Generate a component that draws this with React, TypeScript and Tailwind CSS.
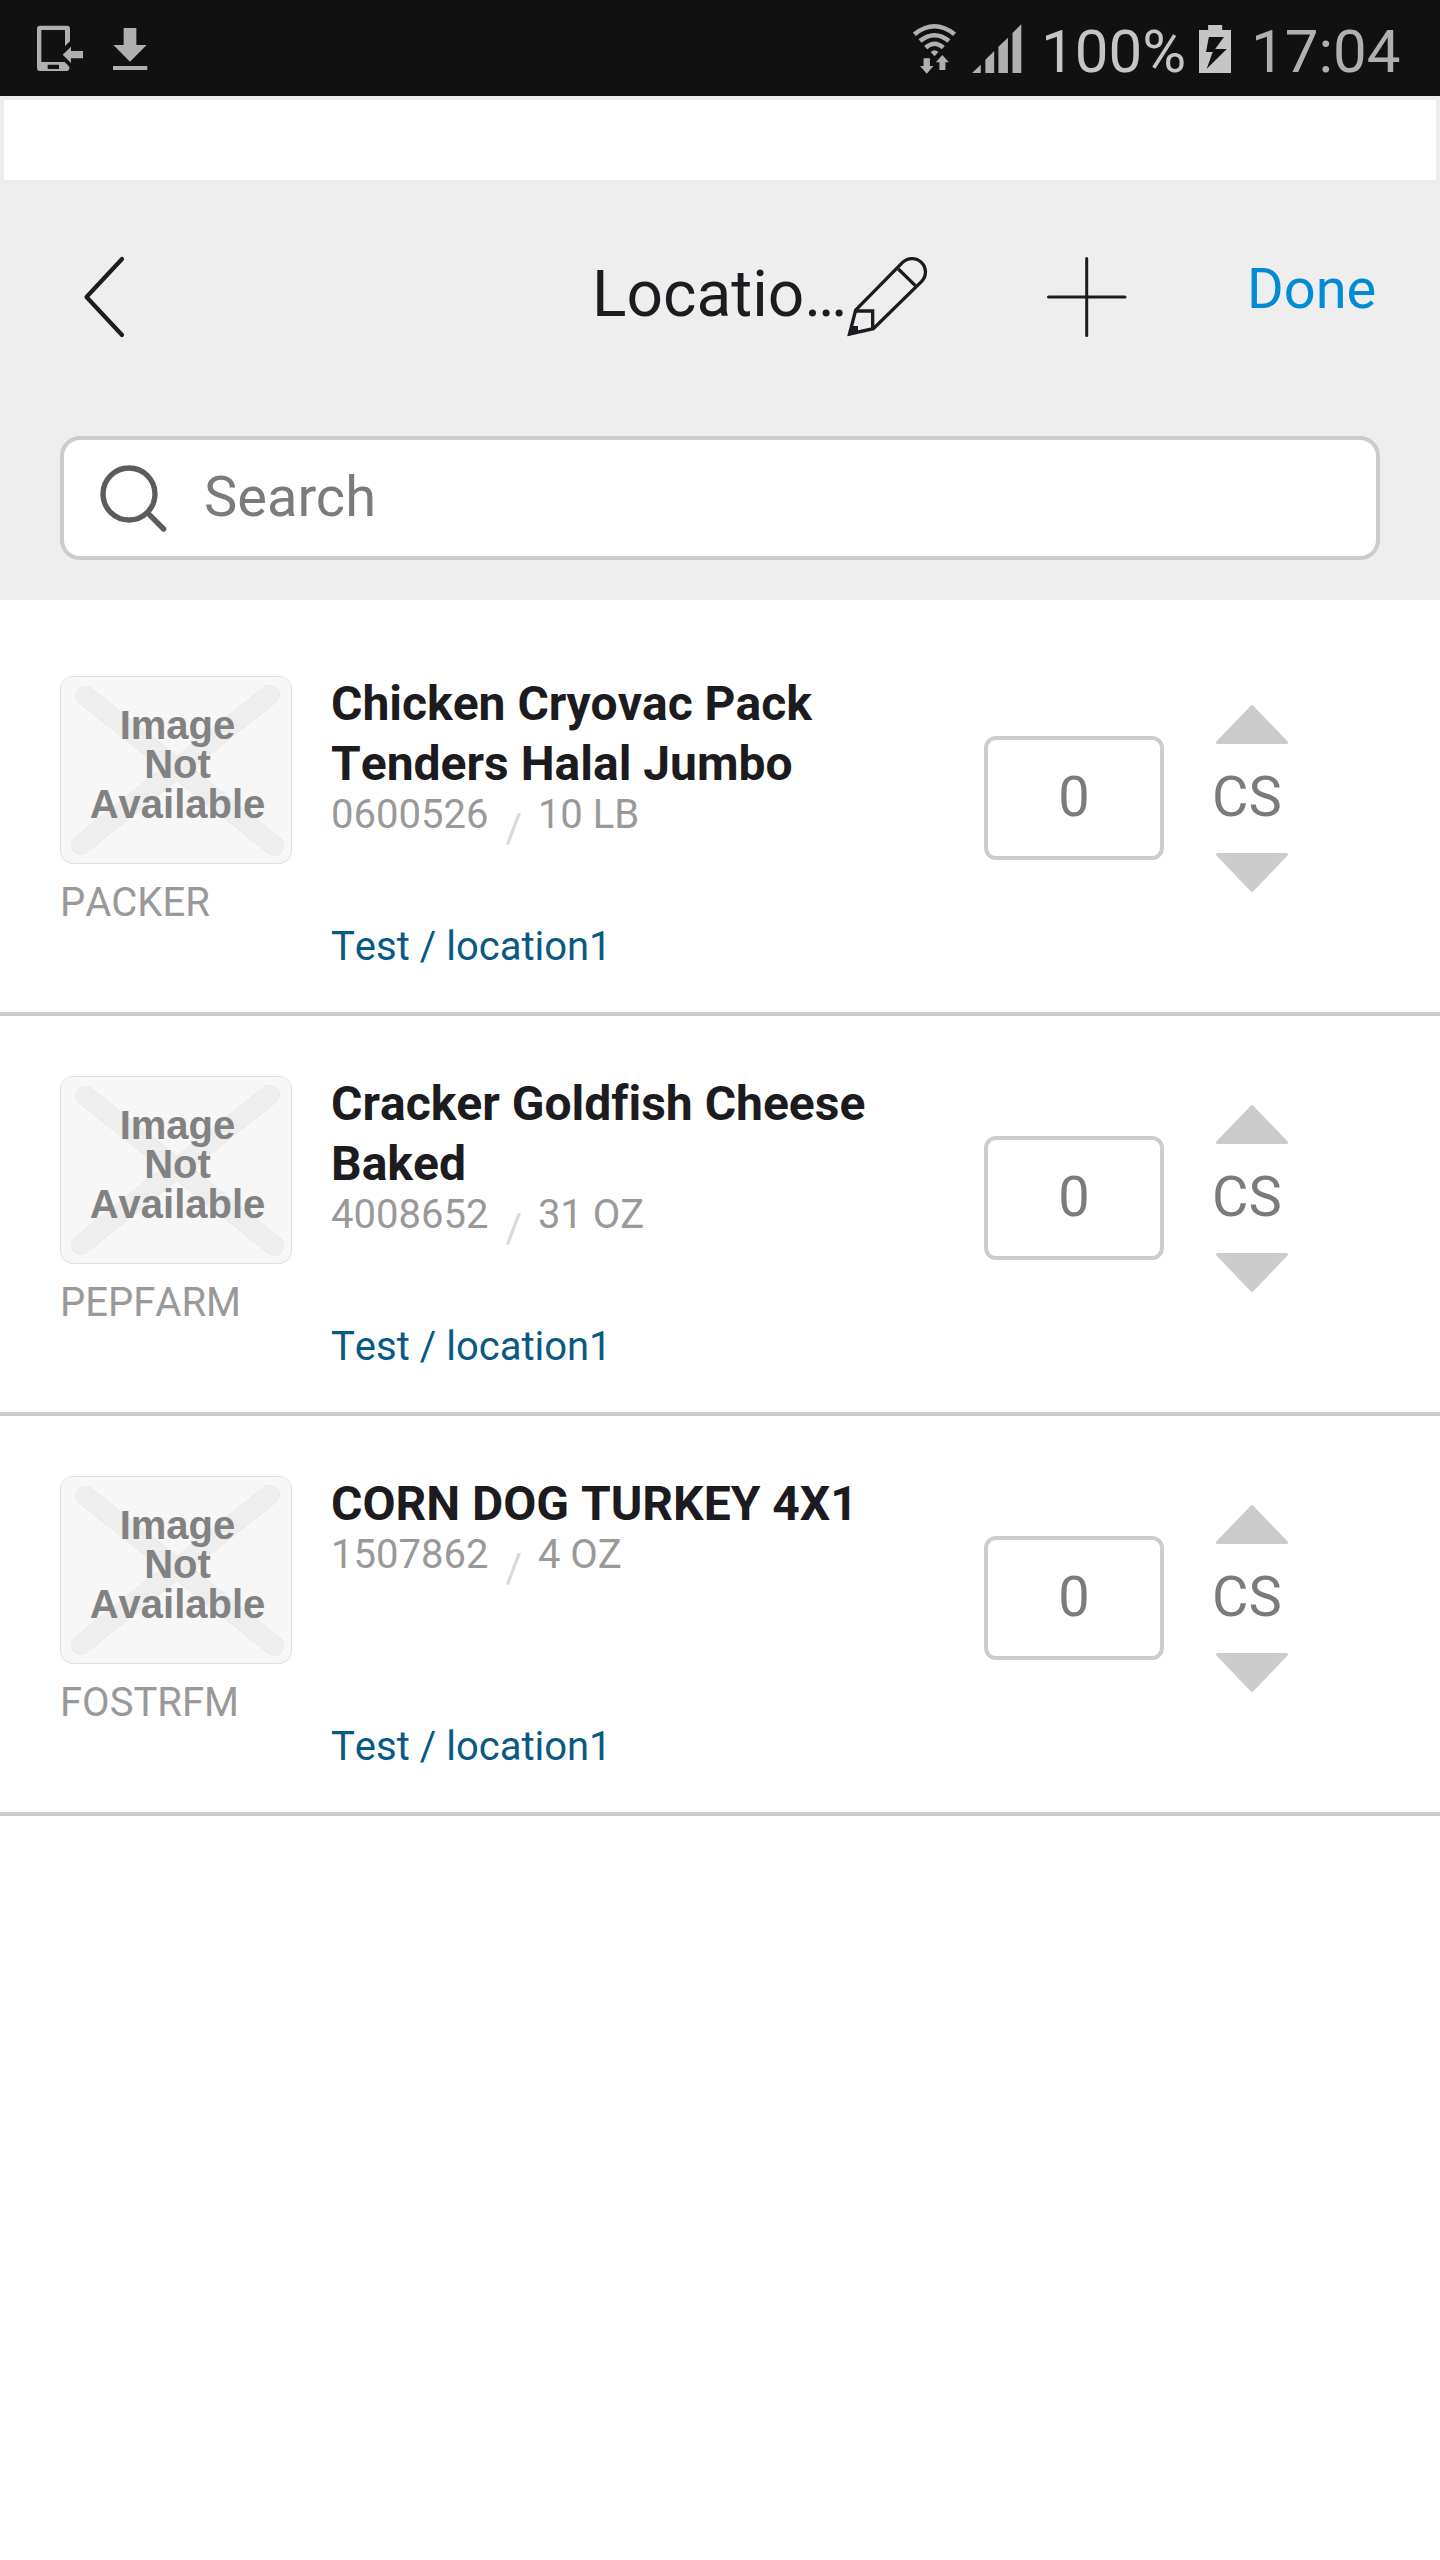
const items = [
  { brand: 'PACKER', title: ['Chicken Cryovac Pack', 'Tenders Halal Jumbo'], sku: '0600526', size: '10 LB' },
  { brand: 'PEPFARM', title: ['Cracker Goldfish Cheese', 'Baked'], sku: '4008652', size: '31 OZ' },
  { brand: 'FOSTRFM', title: ['CORN DOG TURKEY 4X1'], sku: '1507862', size: '4 OZ' },
];

function StatusBar() {
  return (
    <div className="flex h-24 items-start bg-[#111111]">
      <svg className="ml-9 mt-6 h-12 w-12 shrink-0" viewBox="108 72 144 144" fill="#b0b0b0">
        <path
          fillRule="evenodd"
          d="M120 77H201Q210 77 210 86V124L195 138V90H124V186H194L208 200V204Q208 213 199 213H120Q111 213 111 204V86Q111 77 120 77ZM143 194V207H177V194Z"
        />
        <path d="M188 164L213 140V153H249V175H213V189Z" />
      </svg>
      <svg className="ml-7 mt-6 h-12 w-9 shrink-0" viewBox="336 72 108 144" fill="#b0b0b0">
        <path d="M371 84H409V135H440L390 185L340 135H371ZM339 198H442V210H339Z" />
      </svg>
      <svg className="ml-[765px] mt-6 h-[50px] w-[43px] shrink-0" viewBox="66 72 122 150" preserveAspectRatio="none">
        <g fill="none" stroke="#b0b0b0" strokeWidth="13">
          <path d="M70 103Q127 55 184 103" />
          <path d="M86 123Q127 88 168 123" />
          <path d="M102 143Q127 120 152 143" />
        </g>
        <path fill="#b0b0b0" d="M116 156Q127 145 138 156L127 169ZM96 175H114V198H124L105 221L86 198H96ZM141 210V187H131L149 165L168 187H158V210Z" />
      </svg>
      <svg className="ml-4 mt-6 h-[49px] w-[50px] shrink-0" viewBox="233 72 142 147" preserveAspectRatio="none" fill="#b0b0b0">
        <path d="M233 219L258 194V219ZM271 219V179L296 153V219ZM308 219V140L335 113V219ZM348 219V99L373 73V219Z" />
      </svg>
      <span className="ml-[19px] w-[150px] whitespace-nowrap text-[60px] leading-[103px] text-[#c5c5c5]">100%</span>
      <svg className="ml-2 mt-[25px] h-12 w-8 shrink-0" viewBox="881 75 91 144" preserveAspectRatio="none" fill="#c5c5c5">
        <path fillRule="evenodd" d="M881 90H907V75H947V90H972V219H881ZM909 111H952L927 147H960L903 206L920 156H901Z" />
      </svg>
      <span className="ml-5 whitespace-nowrap text-[60px] leading-[103px] text-[#b0b0b0]">17:04</span>
    </div>
  );
}

function Header() {
  return (
    <header className="h-[420px] bg-[#eeeeee]">
      <div className="flex h-64 items-start">
        <svg className="ml-[82px] mt-[75px] h-[84px] w-11 shrink-0" viewBox="0 0 44 84" fill="none" stroke="#1d1d1f" strokeWidth="4.2" strokeLinecap="round" strokeLinejoin="round">
          <path d="M40 4L4.500 42L40 80" />
        </svg>
        <h1 className="ml-[466px] mt-[75px] w-[254px] whitespace-nowrap text-[64px] leading-[80px] text-[#1c1b20]">Locatio…</h1>
        <svg className="mt-[76px] h-[82px] w-[82px] shrink-0" viewBox="828 78 246 246" fill="none" stroke="#1c1b20" strokeWidth="10">
          <path d="M838.500 312L857 240L997 98A40.310 40.310 0 0 1 1055 154L910 296Z" />
          <path d="M857 243H908V296M985 117L1036 167" />
          <path d="M834 318L842 288H864V310Z" fill="#1c1b20" stroke="none" />
        </svg>
        <svg className="ml-[118px] mt-[76px] h-[82px] w-[82px] shrink-0" viewBox="0 0 82 82" stroke="#1d1d1f" strokeWidth="3" strokeLinecap="round">
          <path d="M40.700 2.500V79.500M2.500 41H79" />
        </svg>
        <button className="ml-[119px] mt-[77px] text-[56px] leading-[64px] text-[#008bd6]">Done</button>
      </div>
      <div className="mx-[60px] flex h-[124px] items-start rounded-[20px] border-4 border-[#cccccc] bg-white">
        <svg className="ml-9 mt-[25px] h-[68px] w-[68px] shrink-0" viewBox="180 135 204 204" fill="none" stroke="#5c5c5c" strokeWidth="16" strokeLinecap="round">
          <circle cx="267" cy="222" r="78" />
          <path d="M325 281L371 327" />
        </svg>
        <span className="ml-9 mt-[25px] text-[56px] leading-[64px] text-[#7b7b7b]">Search</span>
      </div>
    </header>
  );
}

function MissingImage() {
  return (
    <div className="relative h-[188px] w-[232px] overflow-hidden rounded-[13px] border border-[#e0e0e0] bg-[#f7f7f7]">
      <svg className="absolute -left-px -top-px h-[188px] w-[232px]" viewBox="60 48 696 564" fill="none" strokeLinecap="round">
        <path d="M137 108L703 557M690 104L123 554" stroke="#e7e7e7" strokeWidth="60" />
        <path d="M137 108L703 557M690 104L123 554" stroke="#eeeeee" strokeWidth="56" />
      </svg>
      <div className="relative pl-[3px] pt-[29px] text-center font-['Liberation_Sans',Arial,sans-serif] text-[40px] font-bold leading-[39.400px] text-[#828282] [font-kerning:none]">
        Image
        <br />
        Not
        <br />
        Available
      </div>
    </div>
  );
}

function Row({ item }: { item: (typeof items)[number] }) {
  return (
    <li className="flex h-[400px] items-start border-b-4 border-[#cccccc] pl-[60px]">
      <div className="w-[232px] pt-[60px]">
        <MissingImage />
        <div className="mt-[15px] text-[40px] leading-[48px] text-[#999999] [font-kerning:none]">{item.brand}</div>
      </div>
      <div className="ml-[39px] mt-[58px] flex h-[297px] w-[653px] flex-col">
        <h2 className="text-[48px] font-bold leading-[60px] text-[#1c1b20] [font-kerning:none] [font-variant-ligatures:none]">
          {item.title.map((line) => (
            <span key={line} className="block whitespace-nowrap">
              {line}
            </span>
          ))}
        </h2>
        <div className="mt-px flex text-[40px] leading-[40px] text-[#999999] [font-kerning:none]">
          <span>{item.sku}</span>
          <span className="ml-[17px] mt-3.5 text-[#d9d9d9]">/</span>
          <span className="ml-4">{item.size}</span>
        </div>
        <a className="mt-auto text-[40px] leading-[48px] text-[#085a84] [font-kerning:none]">Test / location1</a>
      </div>
      <div className="mt-[120px] h-[124px] w-[180px] rounded-xl border-4 border-[#cccccc] pt-[25px] text-center text-[56px] leading-[64px] text-[#7b7b7b]">
        0
      </div>
      <div className="ml-12 mt-[88px] flex h-[189px] flex-col">
        <svg className="ml-1 h-10 w-[72px]" viewBox="0 0 72 40" fill="#cccccc" stroke="#cccccc" strokeWidth="3" strokeLinejoin="round">
          <path d="M36 2.500L70.500 38.500H1.500Z" />
        </svg>
        <span className="mt-[21px] text-[56px] leading-[64px] text-[#7b7b7b]">CS</span>
        <svg className="ml-1 mt-auto h-10 w-[72px]" viewBox="0 0 72 40" fill="#cccccc" stroke="#cccccc" strokeWidth="3" strokeLinejoin="round">
          <path d="M36 37.500L70.500 1.500H1.500Z" />
        </svg>
      </div>
    </li>
  );
}

export default function App() {
  return (
    <div className="h-[2560px] w-[1440px] overflow-hidden bg-white font-[Roboto,sans-serif]">
      <StatusBar />
      <div className="h-[84px] border-x-4 border-t-4 border-[#eeeeee] bg-white" />
      <Header />
      <ul className="pt-4">
        {items.map((item) => (
          <Row key={item.sku} item={item} />
        ))}
      </ul>
    </div>
  );
}
